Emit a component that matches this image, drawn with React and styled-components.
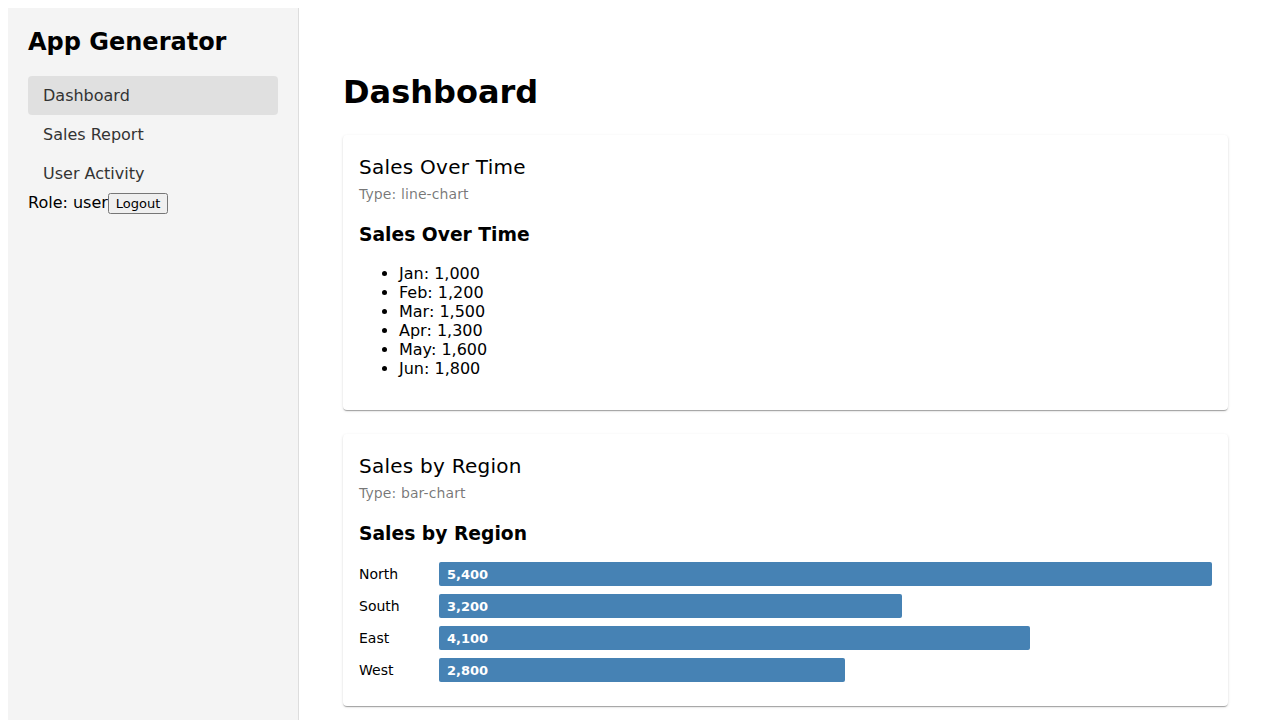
import React from "react";
import styled, { createGlobalStyle } from "styled-components";

const GlobalStyle = createGlobalStyle`
  body {
    margin: 8px;
    background: #ffffff;
    color: #000000;
    font-family: "DejaVu Sans", sans-serif;
    font-size: 16px;
    line-height: 19px;
  }
`;

const Layout = styled.div`
  display: flex;
  min-height: 100vh;
`;

const Sidebar = styled.aside`
  box-sizing: border-box;
  flex: 0 0 291px;
  padding: 20px;
  background: #f4f4f4;
  border-right: 1px solid #dddddd;
`;

const Brand = styled.h2`
  margin: 0 0 20px;
  font-size: 24px;
  line-height: 28px;
`;

const NavList = styled.ul`
  margin: 0;
  padding: 0;
  list-style: none;
`;

const NavLink = styled.a`
  display: block;
  padding: 10px 15px;
  border-radius: 4px;
  color: #333333;
  background: ${({ $active }) => ($active ? "#e0e0e0" : "transparent")};
  text-decoration: none;
`;

const Session = styled.div`
  display: flex;
  align-items: flex-start;
`;

const LogoutButton = styled.button`
  padding: 1px 6px;
  font-family: "DejaVu Sans", sans-serif;
  font-size: 13px;
`;

const Main = styled.main`
  flex: 1;
  min-width: 0;
  padding: 64px 44px 24px;
`;

const PageTitle = styled.h1`
  margin: 0 0 22px;
  font-size: 32px;
  line-height: 41px;
`;

const Card = styled.section`
  margin-bottom: 24px;
  padding: 16px 16px 24px;
  border-radius: 4px;
  background: #ffffff;
  box-shadow:
    0 2px 1px -1px rgba(0, 0, 0, 0.2),
    0 1px 1px 0 rgba(0, 0, 0, 0.14),
    0 1px 3px 0 rgba(0, 0, 0, 0.12);
`;

const CardTitle = styled.div`
  font-size: 20px;
  line-height: 32px;
  letter-spacing: 0.0125em;
`;

const CardType = styled.div`
  color: rgba(0, 0, 0, 0.54);
  font-size: 14px;
  line-height: 22px;
  letter-spacing: 0.00714em;
`;

const WidgetTitle = styled.h3`
  margin: 18px 0 16px;
  line-height: 24px;
`;

const DataList = styled.ul`
  margin: 17px 0 8px;
  padding-left: 40px;
`;

const Bars = styled.div`
  display: flex;
  flex-direction: column;
  gap: 8px;
`;

const BarRow = styled.div`
  display: flex;
  align-items: center;
`;

const BarLabel = styled.span`
  flex: 0 0 80px;
  font-size: 14px;
`;

const Bar = styled.div`
  display: flex;
  align-items: center;
  height: 24px;
  padding-left: 8px;
  border-radius: 2px;
  background: #4682b4;
  color: #ffffff;
  font-size: 13px;
  font-weight: bold;
`;

const pages = ["Dashboard", "Sales Report", "User Activity"];

const salesOverTime = [
  ["Jan", 1000],
  ["Feb", 1200],
  ["Mar", 1500],
  ["Apr", 1300],
  ["May", 1600],
  ["Jun", 1800],
];

const salesByRegion = [
  ["North", 5400],
  ["South", 3200],
  ["East", 4100],
  ["West", 2800],
];

const format = (value) => value.toLocaleString("en-US");

function Widget({ title, type, children }) {
  return (
    <Card>
      <CardTitle>{title}</CardTitle>
      <CardType>Type: {type}</CardType>
      <WidgetTitle>{title}</WidgetTitle>
      {children}
    </Card>
  );
}

export default function App() {
  const max = Math.max(...salesByRegion.map(([, value]) => value));
  return (
    <>
      <GlobalStyle />
      <Layout>
        <Sidebar>
          <Brand>App Generator</Brand>
          <nav>
            <NavList>
              {pages.map((page, i) => (
                <li key={page}>
                  <NavLink href="#" $active={i === 0}>{page}</NavLink>
                </li>
              ))}
            </NavList>
          </nav>
          <Session>
            <span>Role: user</span>
            <LogoutButton type="button">Logout</LogoutButton>
          </Session>
        </Sidebar>
        <Main>
          <PageTitle>Dashboard</PageTitle>
          <Widget title="Sales Over Time" type="line-chart">
            <DataList>
              {salesOverTime.map(([month, value]) => (
                <li key={month}>{month}: {format(value)}</li>
              ))}
            </DataList>
          </Widget>
          <Widget title="Sales by Region" type="bar-chart">
            <Bars>
              {salesByRegion.map(([region, value]) => (
                <BarRow key={region}>
                  <BarLabel>{region}</BarLabel>
                  <Bar style={{ width: `${(value / max) * 90}%` }}>{format(value)}</Bar>
                </BarRow>
              ))}
            </Bars>
          </Widget>
        </Main>
      </Layout>
    </>
  );
}
